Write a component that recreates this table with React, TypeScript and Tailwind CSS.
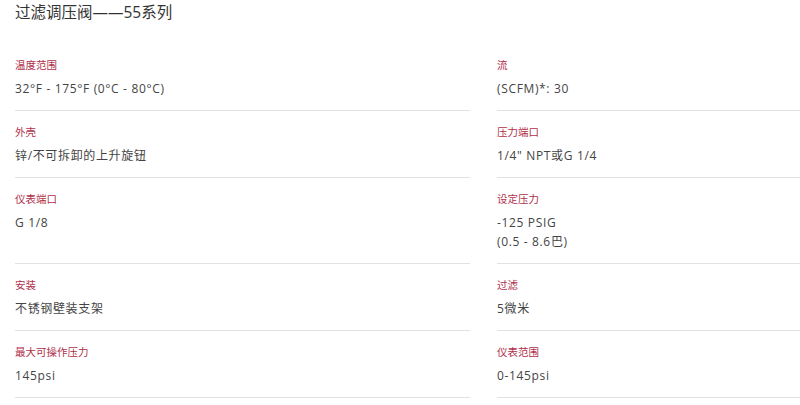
const specs: [string, string[]][] = [
  ["温度范围", ["32°F - 175°F (0°C - 80°C)"]],
  ["流", ["(SCFM)*: 30"]],
  ["外壳", ["锌/不可拆卸的上升旋钮"]],
  ["压力端口", ["1/4\" NPT或G 1/4"]],
  ["仪表端口", ["G 1/8"]],
  ["设定压力", ["-125 PSIG", "(0.5 - 8.6巴)"]],
  ["安装", ["不锈钢壁装支架"]],
  ["过滤", ["5微米"]],
  ["最大可操作压力", ["145psi"]],
  ["仪表范围", ["0-145psi"]],
];

export default function App() {
  return (
    <div
      className="w-[800px] h-[405px] overflow-hidden bg-white pl-[15px]"
      style={{ fontFamily: '"Open Sans", "Noto Sans CJK SC", sans-serif' }}
    >
      <h1 className="h-[44px] pt-[1px] text-[15.5px] leading-[22px] text-[#333] font-normal">
        过滤调压阀——55系列
      </h1>

      <div className="grid grid-cols-[455px_455px] gap-x-[27px]">
        {specs.map(([label, value]) => (
          <div key={label} className="border-b border-[#e2e2e2] pt-[13px] pb-[12px]">
            <div className="text-[10.5px] leading-[16px] text-[#b0304a]">{label}</div>
            <div className="mt-[6px] text-[12px] leading-[19px] tracking-[0.65px] text-[#444]">
              {value.map((v) => (
                <div key={v}>{v}</div>
              ))}
            </div>
          </div>
        ))}
      </div>
    </div>
  );
}
